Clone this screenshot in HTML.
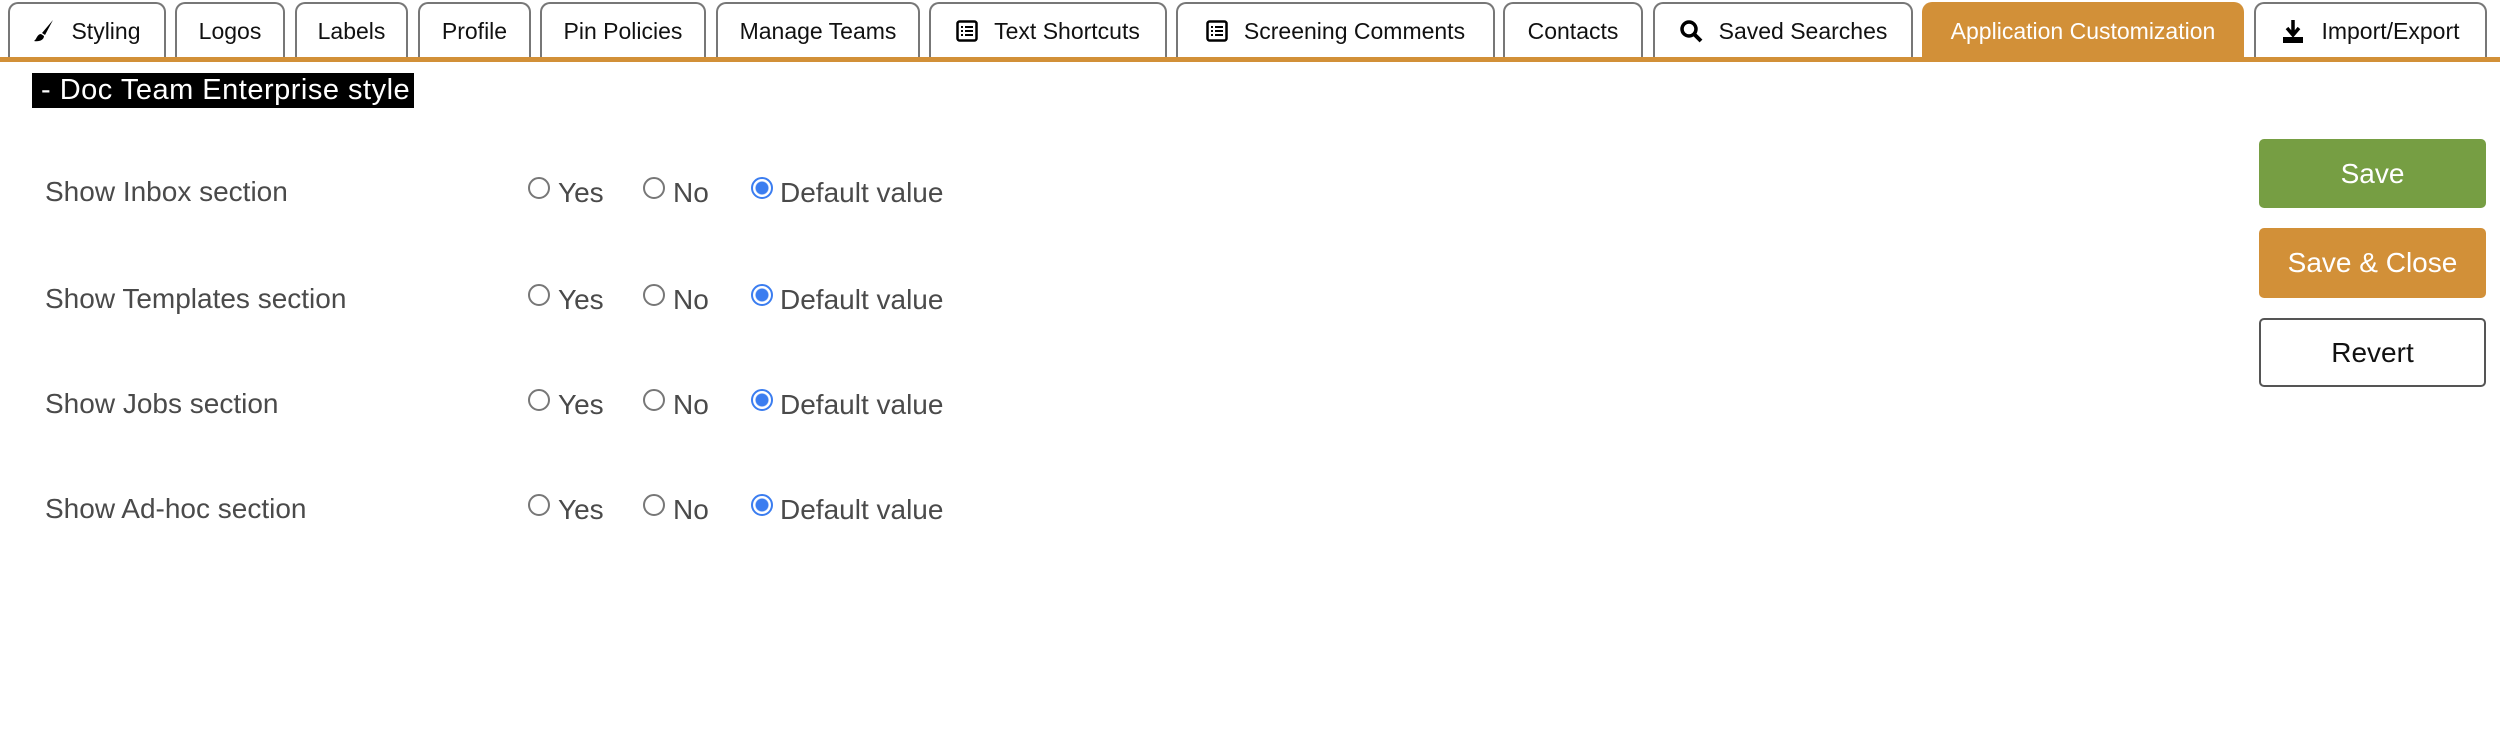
<!DOCTYPE html>
<html><head><meta charset="utf-8"><style>
*{box-sizing:border-box;margin:0;padding:0}
body{width:2500px;height:741px;background:#fff;font-family:"Liberation Sans",sans-serif;position:relative;overflow:hidden}
.tab{position:absolute;top:2px;height:56px;border:2px solid #777;border-bottom:none;border-radius:10px 10px 0 0;background:#fff;color:#111;font-size:23px;display:flex;align-items:center;justify-content:center;gap:16px;white-space:nowrap}
.tab.act{background:#d29038;color:#fff;border-color:#d29038}
.bar{position:absolute;left:0;top:57px;width:2500px;height:5px;background:#d29038}
.title{position:absolute;left:32px;top:73px;width:382px;height:35px;background:#000;color:#fff;font-size:29px;line-height:35px;padding-left:9px;letter-spacing:0.5px}
.row{position:absolute;left:0;width:1100px;font-size:28px;color:#4a4a4a}
.row .lbl{position:absolute;left:45px;top:-15px}
.r{position:absolute;top:-14px;width:22px;height:22px;border:2px solid #777;border-radius:50%}
.r.on{border:2px solid #3b7df0;background:radial-gradient(circle,#3b7df0 0 6px,#fff 7px)}
.t{position:absolute;top:-14px}
.btn{position:absolute;left:2259px;width:227px;border-radius:5px;font-size:28px;display:flex;align-items:center;justify-content:center}
</style></head><body>
<div class="tab" style="left:8px;width:158px"><svg width="22" height="24" viewBox="0 0 22 24"><path d="M20 1 L9 14 L12 16 Z" fill="#000"/><path d="M8 15 C4 15 4 20 1 22 C6 23 11 21 11 17 Z" fill="#000"/></svg>Styling</div>
<div class="tab" style="left:175px;width:110px">Logos</div>
<div class="tab" style="left:295px;width:113px">Labels</div>
<div class="tab" style="left:418px;width:113px">Profile</div>
<div class="tab" style="left:540px;width:166px">Pin Policies</div>
<div class="tab" style="left:716px;width:204px">Manage Teams</div>
<div class="tab" style="left:929px;width:238px"><svg width="22" height="22" viewBox="0 0 22 22"><rect x="1.5" y="1.5" width="19" height="19" rx="2" fill="none" stroke="#000" stroke-width="2.5"/><path d="M5 7h2M9 7h8M5 11h2M9 11h8M5 15h2M9 15h8" stroke="#000" stroke-width="2"/></svg>Text Shortcuts</div>
<div class="tab" style="left:1176px;width:319px"><svg width="22" height="22" viewBox="0 0 22 22"><rect x="1.5" y="1.5" width="19" height="19" rx="2" fill="none" stroke="#000" stroke-width="2.5"/><path d="M5 7h2M9 7h8M5 11h2M9 11h8M5 15h2M9 15h8" stroke="#000" stroke-width="2"/></svg>Screening Comments</div>
<div class="tab" style="left:1503px;width:140px">Contacts</div>
<div class="tab" style="left:1653px;width:260px"><svg width="24" height="24" viewBox="0 0 24 24"><circle cx="10" cy="10" r="7" fill="none" stroke="#000" stroke-width="3.5"/><path d="M15 15l7 7" stroke="#000" stroke-width="4"/></svg>Saved Searches</div>
<div class="tab act" style="left:1922px;width:322px">Application Customization</div>
<div class="tab" style="left:2254px;width:233px"><svg width="24" height="26" viewBox="0 0 24 26"><path d="M12 2v14M6 10l6 7 6-7" stroke="#000" stroke-width="3.5" fill="none"/><rect x="2" y="19" width="20" height="6" fill="#000"/></svg>Import/Export</div>
<div class="bar"></div>
<div class="title">- Doc Team Enterprise style</div>

<div class="row" style="top:191px"><span class="lbl">Show Inbox section</span><span class="r" style="left:528px"></span><span class="t" style="left:558px">Yes</span><span class="r" style="left:643px"></span><span class="t" style="left:673px">No</span><span class="r on" style="left:751px"></span><span class="t" style="left:780px">Default value</span></div>
<div class="row" style="top:298px"><span class="lbl">Show Templates section</span><span class="r" style="left:528px"></span><span class="t" style="left:558px">Yes</span><span class="r" style="left:643px"></span><span class="t" style="left:673px">No</span><span class="r on" style="left:751px"></span><span class="t" style="left:780px">Default value</span></div>
<div class="row" style="top:403px"><span class="lbl">Show Jobs section</span><span class="r" style="left:528px"></span><span class="t" style="left:558px">Yes</span><span class="r" style="left:643px"></span><span class="t" style="left:673px">No</span><span class="r on" style="left:751px"></span><span class="t" style="left:780px">Default value</span></div>
<div class="row" style="top:508px"><span class="lbl">Show Ad-hoc section</span><span class="r" style="left:528px"></span><span class="t" style="left:558px">Yes</span><span class="r" style="left:643px"></span><span class="t" style="left:673px">No</span><span class="r on" style="left:751px"></span><span class="t" style="left:780px">Default value</span></div>

<div class="btn" style="top:139px;height:69px;background:#769e43;color:#fff">Save</div>
<div class="btn" style="top:228px;height:70px;background:#d29038;color:#fff">Save &amp; Close</div>
<div class="btn" style="top:318px;height:69px;background:#fff;border:2px solid #555;color:#111">Revert</div>
</body></html>
